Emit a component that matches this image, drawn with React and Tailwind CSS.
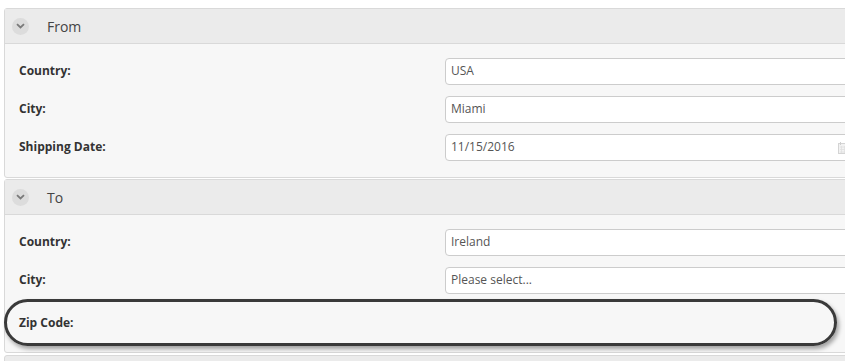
import React from "react";

function Chevron() {
  return (
    <div className="w-[17px] h-[17px] rounded-full bg-[#dcdcdc] flex items-center justify-center">
      <svg width="9" height="6" viewBox="0 0 9 6">
        <path d="M1 1.2 L4.5 4.5 L8 1.2" fill="none" stroke="#7a7a7a" strokeWidth="1.8" />
      </svg>
    </div>
  );
}

function Header({ title }) {
  return (
    <div className="h-[35px] bg-[#ebebeb] border-b border-[#d9d9d9] flex items-center pl-[7px]">
      <Chevron />
      <span className="ml-[18px] text-[14px] text-[#444]">{title}</span>
    </div>
  );
}

function Row({ label, value, calendar }) {
  return (
    <div className="h-[38px] flex items-center">
      <div className="w-[440px] pl-[14px] text-[12px] font-bold text-[#333]">{label}</div>
      <div className="relative h-[27px] w-[420px] bg-white border border-[#ccc] rounded-[4px] flex items-center pl-[5px] text-[12px] text-[#555]">
        {value}
        {calendar && (
          <svg className="absolute left-[392px] top-[7px]" width="10" height="12" viewBox="0 0 10 12">
            <rect x="0.5" y="1.5" width="9" height="10" fill="#f2f2f2" stroke="#d4d4d4" />
            <path d="M2 5h6M2 7.5h6M2 10h6M3.5 4v7M6.5 4v7" stroke="#e0e0e0" strokeWidth="0.8" />
            <path d="M2.5 0v3M7.5 0v3" stroke="#cfcfcf" />
          </svg>
        )}
      </div>
    </div>
  );
}

export default function App() {
  return (
    <div className="w-[845px] h-[361px] overflow-hidden bg-white pl-[4px] pt-[8px] font-['Open_Sans',sans-serif]">
      <div className="w-[900px] flex flex-col gap-[1px]">
        <div className="border border-[#d9d9d9] rounded-[3px] bg-[#f7f7f7]">
          <Header title="From" />
          <div className="pt-[8px] pb-[11px]">
            <Row label="Country:" value="USA" />
            <Row label="City:" value="Miami" />
            <Row label="Shipping Date:" value="11/15/2016" calendar />
          </div>
        </div>
        <div className="border border-[#d9d9d9] rounded-[3px] bg-[#f7f7f7]">
          <Header title="To" />
          <div className="pt-[8px] pb-[6px]">
            <Row label="Country:" value="Ireland" />
            <Row label="City:" value="Please select..." />
            <div className="h-[47px] w-[833px] -ml-[1px] border-[3px] border-[#3a3a3a] rounded-[24px] shadow-[2px_3px_4px_rgba(0,0,0,0.35)] flex items-center pl-[12px] text-[12px] font-bold text-[#333]">
              Zip Code:
            </div>
          </div>
        </div>
        <div className="mt-[1px] border border-[#d9d9d9] rounded-[3px] bg-[#ebebeb] h-[30px]" />
      </div>
    </div>
  );
}
